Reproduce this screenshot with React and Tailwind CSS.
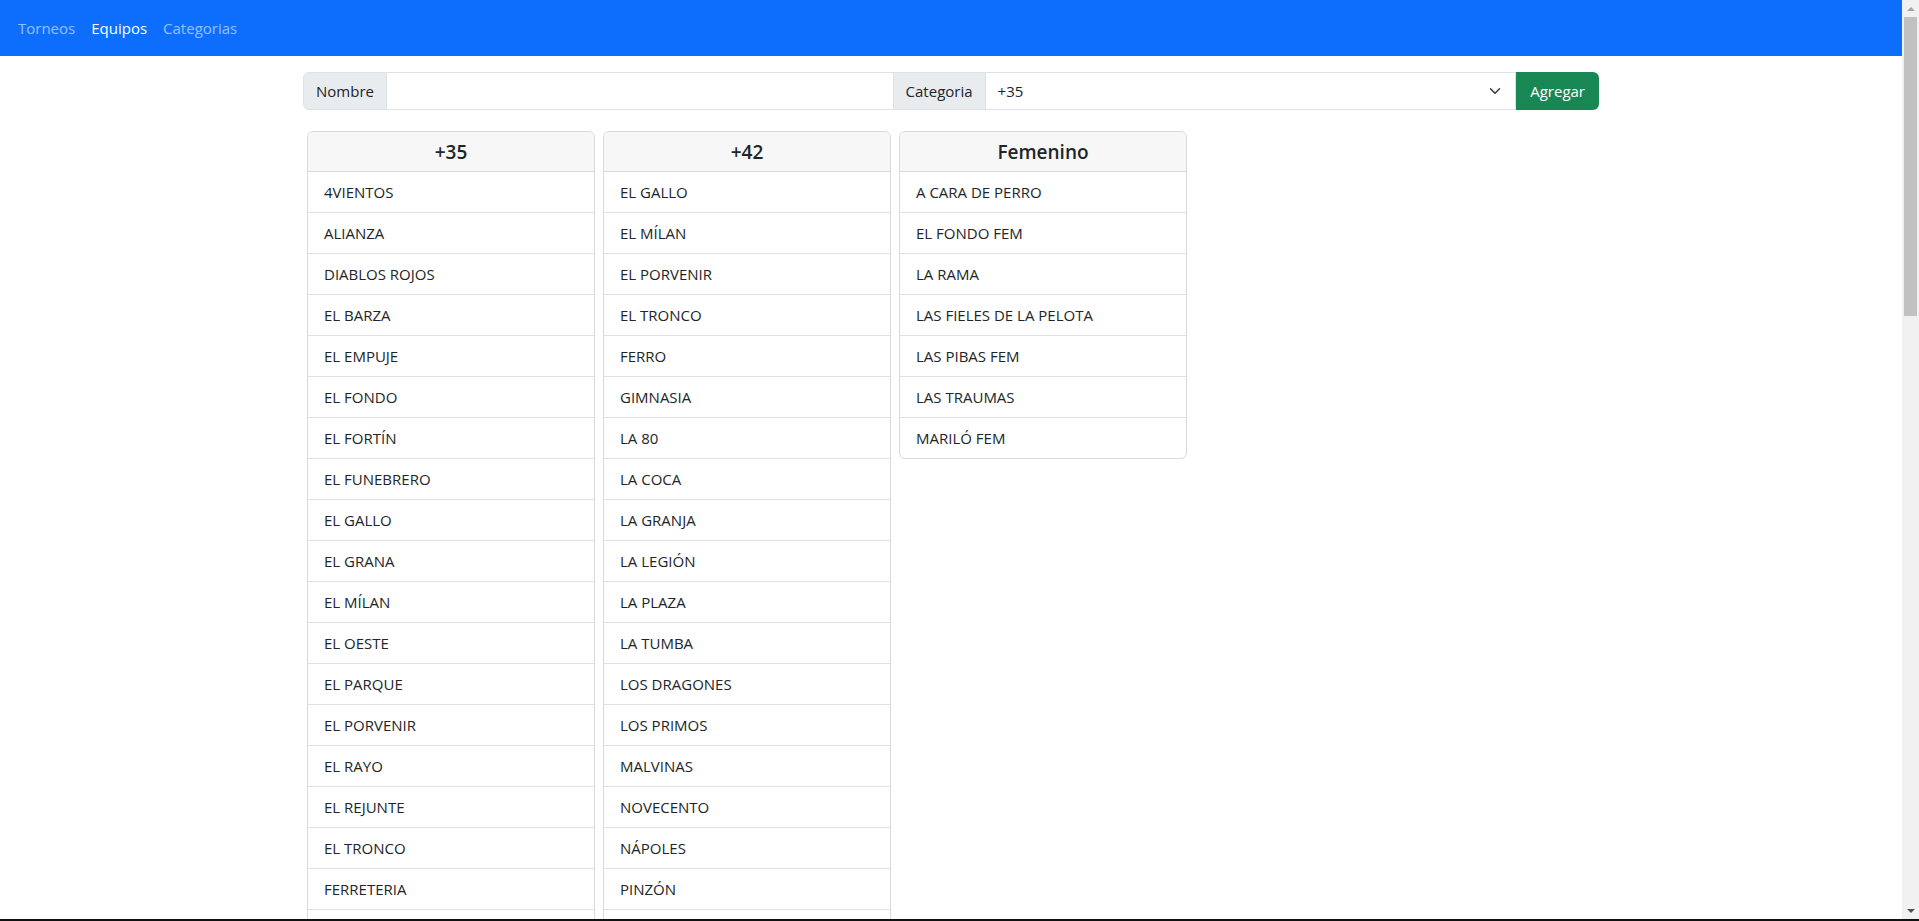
import React from 'react';

const categorias = [
	{
		nombre: '+35',
		equipos: [
			'4VIENTOS',
			'ALIANZA',
			'DIABLOS ROJOS',
			'EL BARZA',
			'EL EMPUJE',
			'EL FONDO',
			'EL FORTÍN',
			'EL FUNEBRERO',
			'EL GALLO',
			'EL GRANA',
			'EL MÍLAN',
			'EL OESTE',
			'EL PARQUE',
			'EL PORVENIR',
			'EL RAYO',
			'EL REJUNTE',
			'EL TRONCO',
			'FERRETERIA',
			'GIMNASIA',
			'LA COCA',
		],
	},
	{
		nombre: '+42',
		equipos: [
			'EL GALLO',
			'EL MÍLAN',
			'EL PORVENIR',
			'EL TRONCO',
			'FERRO',
			'GIMNASIA',
			'LA 80',
			'LA COCA',
			'LA GRANJA',
			'LA LEGIÓN',
			'LA PLAZA',
			'LA TUMBA',
			'LOS DRAGONES',
			'LOS PRIMOS',
			'MALVINAS',
			'NOVECENTO',
			'NÁPOLES',
			'PINZÓN',
			'SAN MARTÍN',
		],
	},
	{
		nombre: 'Femenino',
		equipos: [
			'A CARA DE PERRO',
			'EL FONDO FEM',
			'LA RAMA',
			'LAS FIELES DE LA PELOTA',
			'LAS PIBAS FEM',
			'LAS TRAUMAS',
			'MARILÓ FEM',
		],
	},
];

const CategoriaCard = ({ data }) => {
	return (
		<div className="w-[288px] m-1 self-start border border-[#dadada] rounded-md bg-white overflow-hidden">
			<div className="h-[40px] flex items-center justify-center bg-[#f7f7f7] border-b border-[#dadada]">
				<h5 className="text-[19px] leading-[24px] font-semibold text-[#212529]">
					{data.nombre}
				</h5>
			</div>
			<ul>
				{data.equipos.map((equipo, index, arr) => (
					<li
						key={equipo}
						className={`px-4 py-2 leading-6 text-[#212529] ${
							index !== arr.length - 1 &&
							'border-b border-[#dee2e6]'
						}`}
					>
						{equipo}
					</li>
				))}
			</ul>
		</div>
	);
};

export default function App() {
	return (
		<div className="h-screen flex flex-col overflow-hidden bg-white font-['Open_Sans','Noto_Sans',sans-serif] text-[15px]">
			<div className="flex flex-1 min-h-0">
				<div className="flex-1 min-w-0 overflow-hidden">
					{/* navbar */}
					<nav className="h-[56px] bg-[#0d6efd] flex items-center px-[10px] text-[15px]">
						<a className="px-2 text-white/55">Torneos</a>
						<a className="px-2 text-white">Equipos</a>
						<a className="px-2 text-white/55">Categorias</a>
					</nav>

					<main className="w-[1320px] mx-auto px-3 mt-4">
						{/* formulario */}
						<div className="flex h-[38px]">
							<span className="flex items-center px-3 bg-[#e9ecef] border border-[#dee2e6] rounded-l-md text-[#212529]">
								Nombre
							</span>
							<input
								type="text"
								className="grow basis-[26px] min-w-0 px-3 border border-l-0 border-[#dee2e6] outline-none"
							/>
							<span className="flex items-center px-3 bg-[#e9ecef] border border-l-0 border-[#dee2e6] text-[#212529]">
								Categoria
							</span>
							<div className="grow basis-[50px] min-w-0 flex items-center justify-between pl-3 pr-3 border border-l-0 border-[#dee2e6] text-[#212529]">
								<span>+35</span>
								<svg
									width="16"
									height="12"
									viewBox="0 0 16 16"
									fill="none"
									stroke="#343a40"
									strokeWidth="2"
									strokeLinecap="round"
									strokeLinejoin="round"
								>
									<path d="m2 5 6 6 6-6" />
								</svg>
							</div>
							<button className="px-[14px] bg-[#198754] text-white rounded-r-md">
								Agregar
							</button>
						</div>

						{/* categorias */}
						<div className="flex flex-wrap mt-[17px]">
							{categorias.map((cat) => (
								<CategoriaCard key={cat.nombre} data={cat} />
							))}
						</div>
					</main>
				</div>

				{/* scrollbar */}
				<div className="w-[17px] bg-[#f1f1f1] flex flex-col items-center">
					<div className="h-[17px] flex items-center justify-center">
						<div className="w-0 h-0 border-x-[4px] border-x-transparent border-b-[4px] border-b-[#a3a3a3]" />
					</div>
					<div className="w-[13px] h-[299px] bg-[#c1c1c1]" />
					<div className="flex-1" />
					<div className="h-[17px] flex items-center justify-center">
						<div className="w-0 h-0 border-x-[4px] border-x-transparent border-t-[4px] border-t-[#505050]" />
					</div>
				</div>
			</div>
			<div className="h-[2px] bg-[#111111]" />
		</div>
	);
}
